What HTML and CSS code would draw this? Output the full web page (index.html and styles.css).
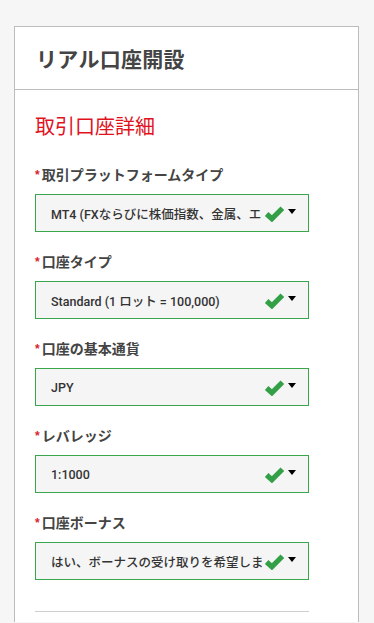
FILE: index.html
```html
<!DOCTYPE html>
<html lang="ja">
<head>
  <meta charset="UTF-8">
  <meta name="viewport" content="width=device-width, initial-scale=1.0">
  <title>リアル口座開設</title>
  <link rel="stylesheet" href="styles.css">
</head>
<body>
  <div class="card">
    <div class="card-head">
      <h1>リアル口座開設</h1>
    </div>
    <div class="card-body">
      <h2>取引口座詳細</h2>

      <div class="field">
        <label><span class="req">*</span>取引プラットフォームタイプ</label>
        <div class="select">
          <span class="value">MT4 (FXならびに株価指数、金属、エネルギーのCFD)</span>
          <svg class="check" viewBox="0 0 20 16"><polyline points="2.5,8.5 7.5,13 17.5,3"/></svg>
          <span class="caret"></span>
        </div>
      </div>

      <div class="field">
        <label><span class="req">*</span>口座タイプ</label>
        <div class="select">
          <span class="value">Standard (1 ロット = 100,000)</span>
          <svg class="check" viewBox="0 0 20 16"><polyline points="2.5,8.5 7.5,13 17.5,3"/></svg>
          <span class="caret"></span>
        </div>
      </div>

      <div class="field">
        <label><span class="req">*</span>口座の基本通貨</label>
        <div class="select">
          <span class="value">JPY</span>
          <svg class="check" viewBox="0 0 20 16"><polyline points="2.5,8.5 7.5,13 17.5,3"/></svg>
          <span class="caret"></span>
        </div>
      </div>

      <div class="field">
        <label><span class="req">*</span>レバレッジ</label>
        <div class="select">
          <span class="value">1:1000</span>
          <svg class="check" viewBox="0 0 20 16"><polyline points="2.5,8.5 7.5,13 17.5,3"/></svg>
          <span class="caret"></span>
        </div>
      </div>

      <div class="field">
        <label><span class="req">*</span>口座ボーナス</label>
        <div class="select">
          <span class="value">はい、ボーナスの受け取りを希望します</span>
          <svg class="check" viewBox="0 0 20 16"><polyline points="2.5,8.5 7.5,13 17.5,3"/></svg>
          <span class="caret"></span>
        </div>
      </div>

      <hr class="divider">
    </div>
  </div>
</body>
</html>
```

FILE: styles.css
```css
body { margin: 0; padding-top: 26px; background: #f6f6f6; font-family: "Liberation Sans", "Noto Sans CJK JP", sans-serif; color: #444; }
.card { margin: 0 15px 0 14px; background: #fff; border: 1px solid #bcbcbc; border-bottom: 0; }
.card-head { height: 62px; border-bottom: 1px solid #bcbcbc; display: flex; align-items: center; padding: 0 21px; }
.card-head h1 { margin: 0; font-size: 21px; font-weight: bold; color: #444; letter-spacing: 0.3px; }
.card-body { padding: 23px 20px 10px 20px; }
.card-body h2 { margin: 0 0 24px; font-size: 20px; line-height: 28px; font-weight: normal; color: #e1121d; }
.field { width: 274px; margin-bottom: 20px; }
.field label { display: block; font-size: 14px; line-height: 20px; font-weight: bold; color: #444; margin-bottom: 9px; }
.req { color: #d9232d; font-size: 12px; margin-right: 2px; vertical-align: 1px; }
.select { height: 36px; border: 1px solid #3aa64b; background: #f5f5f5; display: flex; align-items: center; padding: 0 12px 0 15px; }
.value { flex: 1; overflow: hidden; white-space: nowrap; font-family: Roboto, "Noto Sans CJK JP", sans-serif; font-size: 12.5px; font-weight: 500; color: #333; }
.check { width: 21px; height: 17px; margin-left: 2px; flex: none; }
.check polyline { fill: none; stroke: #33a047; stroke-width: 5; stroke-linejoin: miter; }
.caret { width: 0; height: 0; border-left: 4px solid transparent; border-right: 4px solid transparent; border-top: 5px solid #000; margin-left: 3px; margin-top: -3px; flex: none; }
.divider { width: 274px; margin: 31px 0 0; border: 0; border-top: 1px solid #cfcfcf; }
```
